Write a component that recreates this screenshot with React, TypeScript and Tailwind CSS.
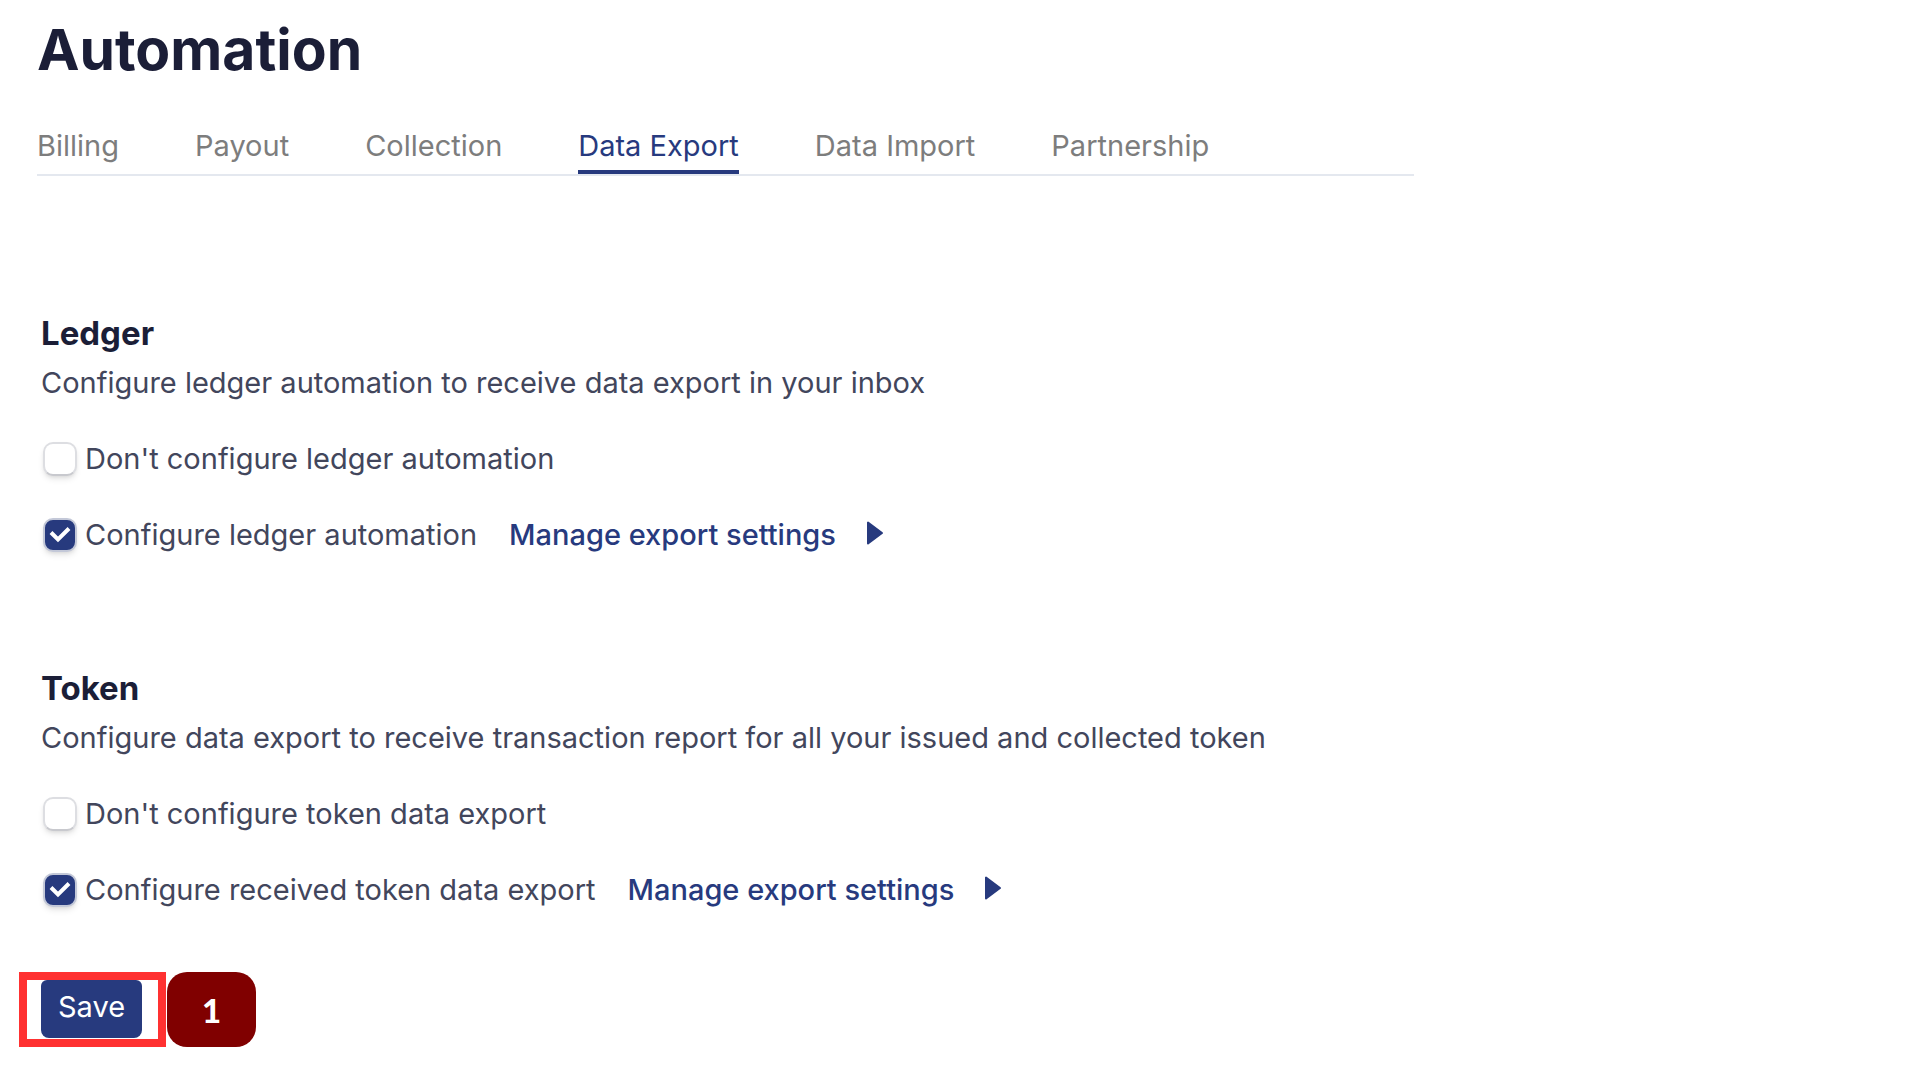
import { useState } from "react";

const tabs = ["Billing", "Payout", "Collection", "Data Export", "Data Import", "Partnership"];

function Checkbox({ id, label, initial }: { id: string; label: string; initial: boolean }) {
  const [checked, setChecked] = useState(initial);
  return (
    <label htmlFor={id} className="flex items-center gap-2">
      <span className="grid h-9 w-9 shrink-0 items-center justify-items-end">
        <input
          id={id}
          type="checkbox"
          checked={checked}
          onChange={() => setChecked(!checked)}
          className="col-start-1 row-start-1 size-[34px] appearance-none rounded-[10px] border-2 border-[#dddee2] border-b-[#c8c9ce] bg-white shadow-md shadow-black/10 checked:border-[#c3c8d8] checked:bg-[#273a7e]"
        />
        {checked && (
          <svg viewBox="0 0 34 34" className="pointer-events-none z-10 col-start-1 row-start-1 size-[34px]" aria-hidden="true">
            <path d="M8 14.5 15 21.5 26 10.5" fill="none" stroke="white" strokeWidth="4" />
          </svg>
        )}
      </span>
      {label}
    </label>
  );
}

function ManageLink() {
  return (
    <a href="#settings" className="flex items-center gap-[30px] font-medium text-[#273a7e]">
      Manage export settings
      <svg viewBox="0 0 18 24" className="mb-1 h-6 w-[18px]" aria-hidden="true">
        <path
          d="M2 1.5v21L16 12z"
          fill="currentColor"
          stroke="currentColor"
          strokeWidth="2"
          strokeLinejoin="round"
        />
      </svg>
    </a>
  );
}

type SectionProps = { id: string; title: string; description: string; off: string; on: string };

function Section({ id, title, description, off, on }: SectionProps) {
  return (
    <section className="flex flex-col">
      <h2 className="text-[33px] leading-10 font-bold text-[#1b1e37]">{title}</h2>
      <p className="mt-2 mb-8 leading-11">{description}</p>
      <div className="flex flex-col gap-8">
        <div className="flex h-11 items-center">
          <Checkbox id={id + "-off"} label={off} initial={false} />
        </div>
        <div className="flex h-11 items-center gap-8">
          <Checkbox id={id + "-on"} label={on} initial={true} />
          <ManageLink />
        </div>
      </div>
    </section>
  );
}

export default function App() {
  return (
    <main className="min-h-screen bg-white pt-4 font-['Inter',sans-serif] text-[29px] text-[#42465c]">
      <h1 className="ml-[37px] text-[57px] leading-[68px] font-bold text-[#1b1e37]">Automation</h1>
      <nav className="mt-[42px] ml-[37px] flex max-w-[1377px] gap-[76px] border-b-2 border-[#e4e8ef] text-[#7d7d7d]">
        {tabs.map((tab) => (
          <a
            key={tab}
            href="#tab"
            className={
              tab === "Data Export"
                ? "border-b-4 border-[#273a7e] pb-1 leading-10 text-[#273a7e]"
                : "border-b-4 border-transparent pb-1 leading-10"
            }
          >
            {tab}
          </a>
        ))}
      </nav>
      <div className="mt-[137px] ml-[41px] flex flex-col gap-[111px]">
        <Section
          id="ledger"
          title="Ledger"
          description="Configure ledger automation to receive data export in your inbox"
          off="Don't configure ledger automation"
          on="Configure ledger automation"
        />
        <Section
          id="token"
          title="Token"
          description="Configure data export to receive transaction report for all your issued and collected token"
          off="Don't configure token data export"
          on="Configure received token data export"
        />
      </div>
      <div className="mt-[60px] ml-[19px] flex gap-px">
        <div className="flex h-[75px] border-8 border-[#ff3131] pr-4 pl-[14px]">
          <button type="button" className="h-[58px] rounded-b-lg rounded-t-md bg-[#273a7e] px-[17px] pb-1 text-white">
            Save
          </button>
        </div>
        <span className="flex h-[75px] w-[89px] items-center justify-center rounded-[20px] bg-[#800000] pt-0.5 font-['Lato',sans-serif] text-[33px] font-black text-white">
          1
        </span>
      </div>
    </main>
  );
}
